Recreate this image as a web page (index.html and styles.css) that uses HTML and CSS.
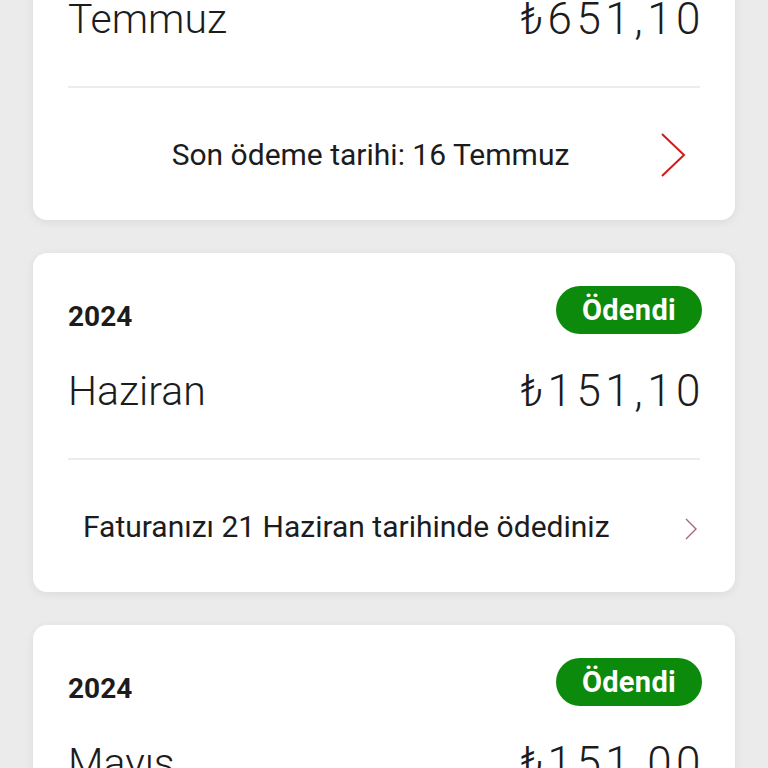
FILE: index.html
```html
<!DOCTYPE html>
<html lang="tr">
<head>
<meta charset="utf-8">
<link rel="stylesheet" href="styles.css">
</head>
<body>
<div class="list">
  <div class="card first">
    <div class="head">
      <span class="year">2024</span>
    </div>
    <div class="main">
      <span class="month">Temmuz</span>
      <span class="amount">₺651,10</span>
    </div>
    <div class="foot center">
      <span class="foot-text">Son ödeme tarihi: 16 Temmuz</span>
      <svg class="chev-big" width="26" height="46" viewBox="0 0 26 46"><polyline points="2,2 24,23 2,44" fill="none" stroke="#d11a1a" stroke-width="2"/></svg>
    </div>
  </div>

  <div class="card">
    <div class="head">
      <span class="year">2024</span>
      <span class="badge">Ödendi</span>
    </div>
    <div class="main">
      <span class="month">Haziran</span>
      <span class="amount">₺151,10</span>
    </div>
    <div class="foot left">
      <span class="foot-text">Faturanızı 21 Haziran tarihinde ödediniz</span>
      <svg class="chev-small" width="12" height="22" viewBox="0 0 12 22"><polyline points="1,1 11,11 1,21" fill="none" stroke="#a8637f" stroke-width="1.4"/></svg>
    </div>
  </div>

  <div class="card">
    <div class="head">
      <span class="year">2024</span>
      <span class="badge">Ödendi</span>
    </div>
    <div class="main">
      <span class="month">Mayıs</span>
      <span class="amount">₺151,00</span>
    </div>
    <div class="foot left">
      <span class="foot-text">Faturanızı 20 Mayıs tarihinde ödediniz</span>
      <svg class="chev-small" width="12" height="22" viewBox="0 0 12 22"><polyline points="1,1 11,11 1,21" fill="none" stroke="#a8637f" stroke-width="1.4"/></svg>
    </div>
  </div>
</div>
</body>
</html>
```

FILE: styles.css
```css
html, body {
  margin: 0;
  padding: 0;
  background: #ebebeb;
  font-family: Roboto, "Liberation Sans", sans-serif;
  color: #1c1c1c;
  overflow: hidden;
  height: 768px;
}

.list {
  display: flex;
  flex-direction: column;
  gap: 33px;
  padding: 0 33px;
  margin-top: -119px;
}

.card {
  background: #ffffff;
  border-radius: 14px;
  box-shadow: 0 2px 10px rgba(0, 0, 0, 0.07);
  padding: 0 35px;
}

.head {
  display: flex;
  justify-content: space-between;
  align-items: center;
  padding-top: 33px;
  height: 48px;
}

.year {
  font-size: 28px;
  font-weight: 700;
  margin-top: 12px;
}

.badge {
  background: #0b8a0b;
  color: #ffffff;
  font-size: 29px;
  font-weight: 700;
  height: 48px;
  line-height: 48px;
  padding: 0 26px;
  margin-right: -2px;
  border-radius: 24px;
  letter-spacing: 0.3px;
}

.main {
  display: flex;
  justify-content: space-between;
  align-items: center;
  margin-top: 32px;
  padding-bottom: 42px;
  border-bottom: 2px solid #ececec;
  line-height: 50px;
  font-weight: 300;
  font-size: 42px;
}

.month {
  font-size: 41px;
}

.amount {
  font-size: 44px;
  letter-spacing: 4.5px;
  margin-right: -5px;
}

.foot {
  height: 132px;
  display: flex;
  align-items: center;
  font-size: 30px;
  margin: 0 -35px;
}

.foot.center {
  padding: 0 49px 0 70px;
}

.foot.center .foot-text {
  flex: 1;
  text-align: center;
}

.chev-big {
  margin-left: 22px;
  margin-top: 2px;
}

.foot.left {
  padding: 0 38px 0 50px;
}

.foot.left .foot-text {
  flex: 1;
}

.chev-small {
  margin-top: 6px;
}
```
